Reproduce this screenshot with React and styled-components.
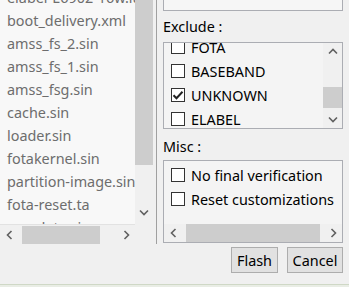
import React from "react";
import styled, { createGlobalStyle } from "styled-components";

const GlobalStyle = createGlobalStyle`
  html, body { margin: 0; padding: 0; background: #f0f0f0; }
  body { font-family: "Noto Sans", "Open Sans", sans-serif; font-size: 14.4px; color: #000; overflow: hidden; }
  * { box-sizing: border-box; }
`;

const Window = styled.div`
  width: 349px;
  height: 287px;
  display: flex;
  flex-direction: column;
  background: #f0f0f0;
  overflow: hidden;
`;

const Main = styled.div`
  display: flex;
  height: 244px;
`;

const LeftPane = styled.div`
  width: 157px;
  border-right: 1px solid #a0a0a0;
  display: flex;
`;

const ListFrame = styled.div`
  width: 153px;
  display: grid;
  grid-template-columns: 135px 18px;
  grid-template-rows: 226px 18px;
`;

const FileList = styled.div`
  height: 225px;
  background: #f8f8f8;
  border-bottom: 1px solid #e2e2e2;
  overflow: hidden;
`;

const FileRows = styled.div`
  margin-top: -14px;
`;

const FileRow = styled.div`
  height: 23px;
  line-height: 23px;
  padding-left: 7px;
  color: #6d6d6d;
  white-space: nowrap;
`;

const VScroll = styled.div`
  display: flex;
  flex-direction: column;
  background: #f0f0f0;
`;

const VTrack = styled.div`
  flex: 1;
  display: flex;
  flex-direction: column;
  padding-top: ${(p) => p.$offset || 0}px;
`;

const VThumb = styled.div`
  height: ${(p) => p.$size}px;
  background: #cdcdcd;
`;

const ArrowBtn = styled.div`
  flex: none;
  width: ${(p) => p.$w || 18}px;
  height: ${(p) => p.$h || 17}px;
  display: flex;
  align-items: center;
  justify-content: center;
  margin-bottom: ${(p) => p.$mb || 0}px;
`;

const HScroll = styled.div`
  display: flex;
  align-items: stretch;
  height: 18px;
  background: #f0f0f0;
`;

const HTrack = styled.div`
  flex: 1;
  display: flex;
  padding: 0 ${(p) => p.$right || 0}px 0 ${(p) => p.$left || 0}px;
`;

const HThumb = styled.div`
  flex: ${(p) => (p.$size ? "none" : 1)};
  width: ${(p) => (p.$size ? `${p.$size}px` : "auto")};
  background: #cdcdcd;
`;

const Corner = styled.div`
  background: #f0f0f0;
`;

const RightPane = styled.div`
  flex: 1;
  display: flex;
  flex-direction: column;
  padding: 0 6px 0 6px;
`;

const TopBox = styled.div`
  height: 11px;
  border: 1px solid #abadb3;
  border-top: none;
  background: #f6f6f6;
`;

const Label = styled.div`
  line-height: 20px;
  height: 20px;
  margin-top: ${(p) => p.$mt}px;
  margin-bottom: ${(p) => p.$mb}px;
`;

const ListBox = styled.div`
  height: ${(p) => p.$h}px;
  border: 1px solid #abadb3;
  background: #f4f4f4;
  display: grid;
  grid-template-columns: 1fr 19px;
  overflow: hidden;
`;

const CheckRows = styled.div`
  overflow: hidden;
`;

const CheckRowsInner = styled.div`
  margin-top: ${(p) => p.$offset}px;
`;

const CheckRow = styled.div`
  height: 24px;
  display: flex;
  align-items: center;
  padding-left: 7px;
  gap: 6px;
  white-space: nowrap;
`;

const Box = styled.span`
  width: 14px;
  height: 14px;
  flex: none;
  border: 1px solid #333;
  background: #fff;
  display: flex;
  align-items: center;
  justify-content: center;
`;

const MiscBox = styled.div`
  height: 83px;
  border: 1px solid #abadb3;
  background: #f4f4f4;
  display: flex;
  flex-direction: column;
  overflow: hidden;
`;

const MiscRows = styled.div`
  flex: 1;
  padding-top: 2px;
  overflow: hidden;
`;

const ButtonRow = styled.div`
  display: flex;
  justify-content: flex-end;
  gap: 9px;
  margin-top: 3px;
  padding-right: 6px;
`;

const Button = styled.button`
  height: 26px;
  width: ${(p) => p.$w}px;
  padding: 0;
  border: 1px solid #adadad;
  background: #e1e1e1;
  font-family: inherit;
  font-size: 14.4px;
  color: #000;
`;

const Status = styled.div`
  margin-top: auto;
  height: 3px;
  border-top: 1px solid #cfd8c6;
  background: #e9ede5;
`;

const Chevron = ({ dir }) => {
  const paths = {
    up: "M1 5.5 L5 1.5 L9 5.5",
    down: "M1 1.5 L5 5.5 L9 1.5",
    left: "M5.5 1 L1.5 5 L5.5 9",
    right: "M1.5 1 L5.5 5 L1.5 9",
  };
  const vertical = dir === "up" || dir === "down";
  return (
    <svg width={vertical ? 10 : 7} height={vertical ? 7 : 10} viewBox={vertical ? "0 0 10 7" : "0 0 7 10"}>
      <path d={paths[dir]} fill="none" stroke="#606060" strokeWidth="1.6" />
    </svg>
  );
};

const Check = ({ checked }) => (
  <Box>
    {checked && (
      <svg width="12" height="12" viewBox="0 0 12 12">
        <path d="M1.5 6.2 L4.5 9.2 L10.5 2.8" fill="none" stroke="#222" strokeWidth="2" />
      </svg>
    )}
  </Box>
);

const files = [
  "elabel-E6902-16w.lua",
  "boot_delivery.xml",
  "amss_fs_2.sin",
  "amss_fs_1.sin",
  "amss_fsg.sin",
  "cache.sin",
  "loader.sin",
  "fotakernel.sin",
  "partition-image.sin",
  "fota-reset.ta",
  "userdata.sin",
];

const exclude = [
  { name: "FOTA", checked: false },
  { name: "BASEBAND", checked: false },
  { name: "UNKNOWN", checked: true },
  { name: "ELABEL", checked: false },
];

const misc = ["No final verification", "Reset customizations"];

export default function App() {
  return (
    <>
      <GlobalStyle />
      <Window>
        <Main>
          <LeftPane>
            <ListFrame>
              <FileList>
                <FileRows>
                  {files.map((f) => (
                    <FileRow key={f}>{f}</FileRow>
                  ))}
                </FileRows>
              </FileList>
              <VScroll>
                <VTrack>
                  <VThumb $size={165} />
                </VTrack>
                <ArrowBtn $mb={5}>
                  <Chevron dir="down" />
                </ArrowBtn>
              </VScroll>
              <HScroll>
                <ArrowBtn $h={18} $w={18}>
                  <Chevron dir="left" />
                </ArrowBtn>
                <HTrack $left={4} $right={16}>
                  <HThumb $size={78} />
                </HTrack>
                <ArrowBtn $h={18} $w={18}>
                  <Chevron dir="right" />
                </ArrowBtn>
              </HScroll>
              <Corner />
            </ListFrame>
          </LeftPane>
          <RightPane>
            <TopBox />
            <Label $mt={6} $mb={5}>Exclude :</Label>
            <ListBox $h={87}>
              <CheckRows>
                <CheckRowsInner $offset={-8}>
                  {exclude.map((e) => (
                    <CheckRow key={e.name}>
                      <Check checked={e.checked} />
                      {e.name}
                    </CheckRow>
                  ))}
                </CheckRowsInner>
              </CheckRows>
              <VScroll>
                <ArrowBtn $w={19}>
                  <Chevron dir="up" />
                </ArrowBtn>
                <VTrack $offset={27}>
                  <VThumb $size={21} />
                </VTrack>
                <ArrowBtn $w={19}>
                  <Chevron dir="down" />
                </ArrowBtn>
              </VScroll>
            </ListBox>
            <Label $mt={8} $mb={3}>Misc :</Label>
            <MiscBox>
              <MiscRows>
                {misc.map((m) => (
                  <CheckRow key={m}>
                    <Check />
                    {m}
                  </CheckRow>
                ))}
              </MiscRows>
              <HScroll>
                <ArrowBtn $h={18} $w={18}>
                  <Chevron dir="left" />
                </ArrowBtn>
                <HTrack $left={4} $right={4}>
                  <HThumb />
                </HTrack>
                <ArrowBtn $h={18} $w={18}>
                  <Chevron dir="right" />
                </ArrowBtn>
              </HScroll>
            </MiscBox>
          </RightPane>
        </Main>
        <ButtonRow>
          <Button $w={47}>Flash</Button>
          <Button $w={56}>Cancel</Button>
        </ButtonRow>
        <Status />
      </Window>
    </>
  );
}
